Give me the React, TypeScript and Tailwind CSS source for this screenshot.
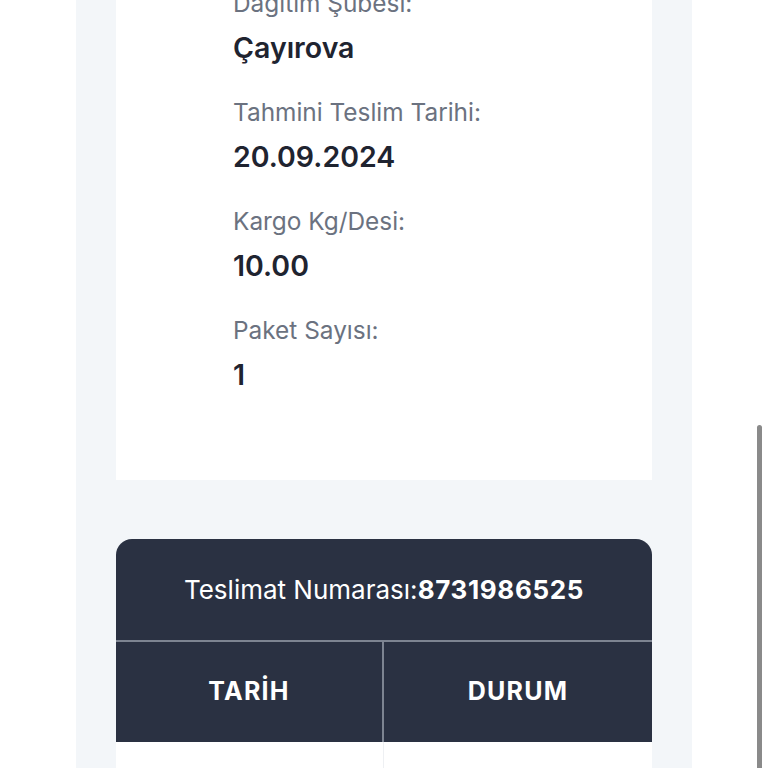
import React from 'react';

const fields = [
  { label: 'Dağıtım Şubesi:', value: 'Çayırova' },
  { label: 'Tahmini Teslim Tarihi:', value: '20.09.2024' },
  { label: 'Kargo Kg/Desi:', value: '10.00' },
  { label: 'Paket Sayısı:', value: '1' },
];

export default function App() {
  return (
    <div className="relative h-[768px] overflow-hidden bg-white font-['Inter',sans-serif]">
      <div className="mx-[76px] h-full bg-[#f3f6f9] px-10">
        {/* Shipment details */}
        <div className="flow-root bg-white pl-[117px] pb-[87px]">
          <div className="-mt-[13px] flex flex-col gap-[30px]">
            {fields.map((f) => (
              <div key={f.label} className="flex flex-col">
                <span className="h-8 text-[24.4px] leading-8 text-[#6b7280]">{f.label}</span>
                <span className="mt-[11px] h-9 text-[28.5px] font-semibold leading-9 text-[#1f2430]">
                  {f.value}
                </span>
              </div>
            ))}
          </div>
        </div>

        {/* Tracking table */}
        <div className="mt-[59px] overflow-hidden rounded-t-2xl bg-[#2a3142]">
          <div className="flex h-[101px] items-center justify-center text-[26px] text-white">
            Teslimat Numarası:<span className="font-bold tracking-wide">8731986525</span>
          </div>
          <div className="grid grid-cols-2 border-t-2 border-[#7d8491]">
            <div className="flex h-[100px] items-center justify-center border-r-2 border-[#7d8491] text-[25px] font-bold tracking-wider text-white">
              TARİH
            </div>
            <div className="flex h-[100px] items-center justify-center text-[25px] font-bold tracking-wider text-white">
              DURUM
            </div>
          </div>
          <div className="grid h-[80px] grid-cols-2 bg-white">
            <div className="border-r border-[#eef0f3]" />
            <div />
          </div>
        </div>
      </div>

      {/* scrollbar */}
      <div className="absolute right-[6px] top-[425px] h-[360px] w-[5px] rounded-full bg-[#8a8a8a]" />
    </div>
  );
}
